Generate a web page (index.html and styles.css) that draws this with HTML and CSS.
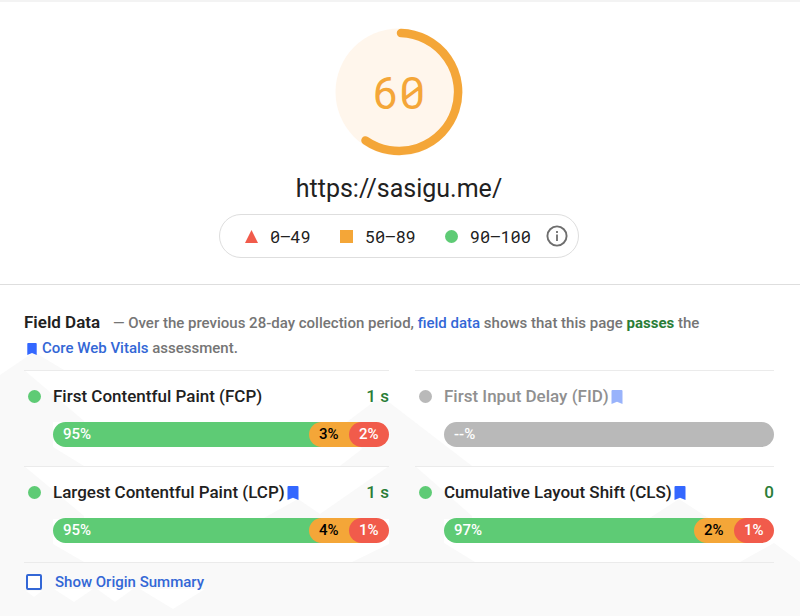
FILE: index.html
```html
<!DOCTYPE html>
<html lang="en">
<head>
<meta charset="utf-8">
<meta name="viewport" content="width=device-width, initial-scale=1">
<title>PageSpeed report</title>
<link rel="stylesheet" href="styles.css">
</head>
<body>
<svg class="symbols" aria-hidden="true">
  <symbol id="bookmark" viewBox="0 0 11 14"><path d="M1 0h9a1 1 0 0 1 1 1v13l-5.500-2.300L0 14V1a1 1 0 0 1 1-1z" fill="currentColor"/></symbol>
</svg>
<header class="summary">
  <div class="gauge">
    <svg class="gauge-ring" viewBox="0 0 128 128" aria-hidden="true">
      <circle cx="64" cy="64" r="63.500" fill="#fff6ec"/>
      <path d="M66 5.040A59 59 0 1 1 30.500 112.500" fill="none" stroke="#f4a638" stroke-width="8.500" stroke-linecap="round"/>
    </svg>
    <span class="gauge-score">60</span>
  </div>
  <h1 class="site">https://sasigu.me/</h1>
  <div class="scale">
    <span class="range"><svg class="mark" viewBox="0 0 13 13" aria-hidden="true"><path d="M6.500 0L13 13H0z" fill="#f15b4b"/></svg>0–49</span>
    <span class="range"><svg class="mark" viewBox="0 0 13 13" aria-hidden="true"><path d="M0 0h13v13H0z" fill="#f4a638"/></svg>50–89</span>
    <span class="range"><svg class="mark" viewBox="0 0 13 13" aria-hidden="true"><circle cx="6.500" cy="6.500" r="6.500" fill="#5ecb75"/></svg>90–100</span>
    <button class="info" type="button" aria-label="About the score scale">
      <svg viewBox="0 0 22 22" aria-hidden="true"><circle cx="11" cy="11" r="9.600" fill="none" stroke="#6e6e6e" stroke-width="1.900"/><path d="M10.100 9.600h1.800V16h-1.800zM10.100 6h1.800v1.900h-1.800z" fill="#6e6e6e"/></svg>
    </button>
  </div>
</header>
<main class="field">
  <svg class="facets" viewBox="0 0 800 331" preserveAspectRatio="none" aria-hidden="true">
    <path fill="#f9f9f9" d="M0 90L34 67L64 85H24L84 136V137H53V162L84 181H24L84 231V234H53V259L84 277H0z"/>
    <path fill="#f9f9f9" d="M340 181L362 164L347 137L376 115L390 118L472 181zM262 234L298 214L320 229L389 181H415L472 231V234H444V258L475 277H352L389 259V234z"/>
    <path fill="#f9f9f9" d="M648 234L679 214L710 234zM740 277L774 258L800 277zM0 277H800V331H0z"/>
    <path fill="#ffffff" d="M26 306h16l-8 6zM54 304h39l-19 13zM97 304h36l-18 13zM140 304h65l-32 20z"/>
  </svg>
  <p class="intro"><strong class="intro-title">Field Data</strong> — Over the previous 28-day collection period, <a href="#field-data">field data</a> shows that this page <b class="pass">passes</b> the <br><a href="#vitals"><svg class="flag small" aria-hidden="true"><use href="#bookmark"/></svg>Core Web Vitals</a> assessment.</p>
  <div class="metrics">
    <section class="metric">
      <i class="dot"></i><h2 class="name">First Contentful Paint (FCP)</h2><span class="value">1 s</span>
      <div class="bar"><span class="good">95%</span><span class="average">3%</span><span class="poor">2%</span></div>
    </section>
    <section class="metric unavailable">
      <i class="dot"></i><h2 class="name">First Input Delay (FID)<svg class="flag" aria-hidden="true"><use href="#bookmark"/></svg></h2>
      <div class="bar"><span class="none">--%</span></div>
    </section>
    <section class="metric">
      <i class="dot"></i><h2 class="name">Largest Contentful Paint (LCP)<svg class="flag" aria-hidden="true"><use href="#bookmark"/></svg></h2><span class="value">1 s</span>
      <div class="bar"><span class="good">95%</span><span class="average">4%</span><span class="poor">1%</span></div>
    </section>
    <section class="metric">
      <i class="dot"></i><h2 class="name">Cumulative Layout Shift (CLS)<svg class="flag" aria-hidden="true"><use href="#bookmark"/></svg></h2><span class="value">0</span>
      <div class="bar"><span class="good">97%</span><span class="average">2%</span><span class="poor">1%</span></div>
    </section>
  </div>
  <label class="origin"><input type="checkbox">Show Origin Summary</label>
</main>
</body>
</html>
```
FILE: styles.css
```css
* { box-sizing: border-box; }
body {
  margin: 0;
  min-height: 100vh;
  display: flex;
  flex-direction: column;
  background: #fff;
  color: #212121;
  font-family: Roboto, "Liberation Sans", sans-serif;
}
a { color: #3367d6; text-decoration: none; }
.symbols { display: none; }

.summary {
  display: flex;
  flex-direction: column;
  align-items: center;
  padding: 26px 2px 26px 0;
  border-top: 2px solid #f3f3f3;
  border-bottom: 1px solid #dedede;
}
.gauge { display: grid; width: 128px; height: 128px; place-items: center; }
.gauge > * { grid-area: 1 / 1; }
.gauge-ring { width: 100%; height: 100%; }
.gauge-score, .range {
  font-family: "Roboto Mono", Inter, monospace;
  font-variant-numeric: tabular-nums slashed-zero;
}
.gauge-score { font-size: 44px; line-height: 48px; color: #f4a638; }
.site { margin: 17px 0 9px; font-size: 25px; line-height: 32px; font-weight: 400; }
.scale {
  display: flex;
  align-items: center;
  height: 44px;
  padding: 0 10px 0 25px;
  border: 1px solid #dedede;
  border-radius: 22px;
}
.range { display: flex; align-items: center; gap: 12px; margin-right: 29px; font-size: 17px; }
.range:nth-child(3) { margin-right: 15px; }
.mark { width: 13px; height: 13px; }
.info { width: 22px; height: 22px; padding: 0; border: 0; background: none; }
.info svg { display: block; }

.field { position: relative; flex: 1; padding: 25px 26px 20px 24px; }
.facets { position: absolute; inset: 0; width: 100%; height: 100%; z-index: -1; }
.intro { margin: 0 0 9px; font-size: 15px; line-height: 25px; font-weight: 500; color: #757575; }
.intro-title { margin-right: 9px; font-size: 17px; line-height: 24px; font-weight: 600; color: #212121; }
.pass { font-weight: 700; color: #2a7d37; }
.flag { width: 12px; height: 14px; margin-left: 2px; vertical-align: -2px; color: #3367ff; }
.flag.small { margin: 0 5px 0 3px; width: 10px; height: 12px; }

.metrics { display: grid; grid-template-columns: 365fr 359fr; column-gap: 26px; }
.metric {
  display: grid;
  grid-template-columns: 29px 1fr auto;
  align-content: start;
  align-items: center;
  row-gap: 13px;
  height: 96px;
  padding-top: 12px;
  border-top: 1px solid #ebebeb;
}
.dot { width: 13px; height: 13px; margin-left: 4px; border-radius: 50%; background: #5ecb75; }
.name { margin: 0; font-size: 17px; line-height: 26px; font-weight: 500; }
.value { font-size: 17px; font-weight: 500; color: #2a7d37; }
.bar { grid-column: 2 / -1; display: flex; height: 25px; font-size: 15px; line-height: 25px; font-weight: 500; color: #fff; }
.bar span { padding-left: 10px; border-radius: 13px; }
.bar .good { flex: 1; margin-right: -13px; border-radius: 13px 0 0 13px; background: #5ecb75; }
.bar .average { width: 53px; margin-right: -13px; border-radius: 13px 0 0 13px; background: #f4a638; color: #000; }
.bar .poor { width: 40px; background: #f15b4b; }
.bar .none { flex: 1; background: #b9b9b9; }
.unavailable .name { color: #909090; }
.unavailable .dot { background: #b9b9b9; }
.unavailable .flag { color: #99b3fb; }

.origin {
  display: flex;
  align-items: center;
  gap: 13px;
  padding: 7px 0 0 2px;
  border-top: 1px solid #ebebeb;
  font-size: 15px;
  line-height: 24px;
  font-weight: 500;
  color: #3367d6;
}
.origin input { appearance: none; width: 16px; height: 16px; margin: 0; border: 2px solid #3367d6; border-radius: 2px; background: #fff; }
```
